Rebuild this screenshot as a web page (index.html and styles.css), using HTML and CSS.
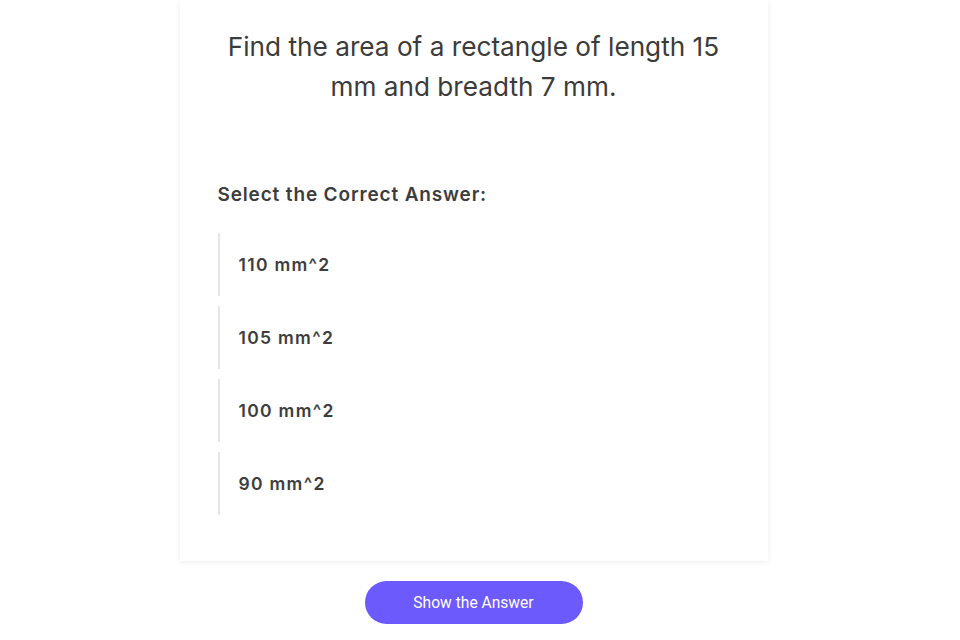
FILE: index.html
```html
<!DOCTYPE html>
<html>
<head>
<meta charset="utf-8">
<link rel="stylesheet" href="styles.css">
</head>
<body>
<div class="page">
  <div class="card">
    <h1 class="question">Find the area of a rectangle of length 15 mm and breadth 7 mm.</h1>
    <h2 class="prompt">Select the Correct Answer:</h2>
    <ul class="options">
      <li class="option">110 mm^2</li>
      <li class="option">105 mm^2</li>
      <li class="option">100 mm^2</li>
      <li class="option">90 mm^2</li>
    </ul>
  </div>
  <button class="show-btn">Show the Answer</button>
</div>
</body>
</html>
```

FILE: styles.css
```css
html, body {
  margin: 0;
  padding: 0;
  background: #ffffff;
  font-family: Inter, "Liberation Sans", sans-serif;
  color: #3d3d3d;
}
.page {
  display: flex;
  flex-direction: column;
  align-items: center;
  width: 960px;
}
.card {
  box-sizing: border-box;
  width: 588px;
  margin-left: -13px;
  padding: 27px 38px 46px 38px;
  background: #fff;
  box-shadow: 0 1px 6px rgba(0, 0, 0, 0.08);
}
.question {
  margin: 0 auto;
  width: 512px;
  font-size: 26.2px;
  font-weight: 400;
  line-height: 40px;
  text-align: center;
  color: #3b3b3b;
}
.prompt {
  margin: 76px 0 26px 0;
  font-size: 19px;
  font-weight: 600;
  letter-spacing: 0.85px;
  line-height: 24px;
  color: #3d3d3d;
}
.options {
  list-style: none;
  margin: 0;
  padding: 0;
  display: flex;
  flex-direction: column;
  gap: 10px;
}
.option {
  box-sizing: border-box;
  height: 63px;
  display: flex;
  align-items: center;
  padding-left: 19px;
  border-left: 2px solid #e6e6e6;
  font-size: 17.5px;
  font-weight: 600;
  letter-spacing: 1.3px;
  color: #3d3d3d;
}
.show-btn {
  margin-top: 20px;
  margin-left: -13px;
  width: 218px;
  height: 43px;
  border: none;
  border-radius: 22px;
  background: #6c5afd;
  color: #fff;
  font-family: Roboto, "Liberation Sans", sans-serif;
  font-size: 15.6px;
  font-weight: 400;
}
```
